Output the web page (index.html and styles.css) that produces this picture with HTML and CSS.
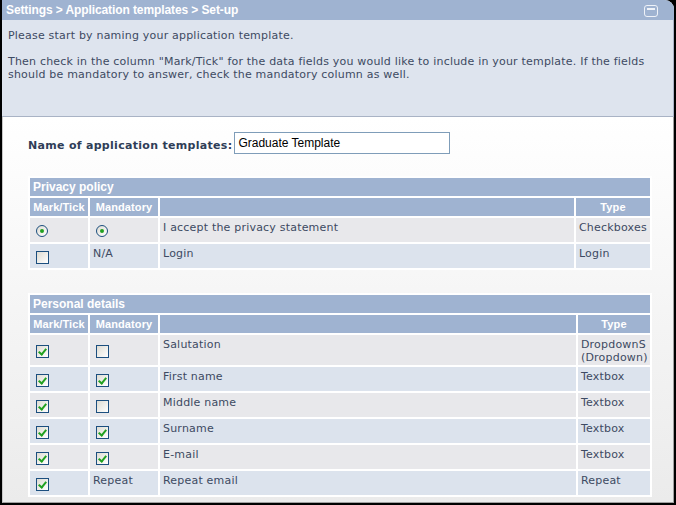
FILE: index.html
```html
<!DOCTYPE html>
<html>
<head>
<meta charset="utf-8">
<link rel="stylesheet" href="styles.css">
</head>
<body>
<div class="window">
  <div class="titlebar">
    <span class="title">Settings &gt; Application templates &gt; Set-up</span>
    <span class="minbtn"></span>
  </div>
  <div class="info">
    <p>Please start by naming your application template.</p>
    <p>Then check in the column "Mark/Tick" for the data fields you would like to include in your template. If the fields should be mandatory to answer, check the mandatory column as well.</p>
  </div>
  <div class="content">
    <div class="namerow">
      <label class="namelabel">Name of application templates:</label>
      <span class="nameinput">Graduate Template</span>
    </div>

    <table class="grid">
      <colgroup><col class="k-mark"><col class="k-mand"><col><col class="k-type1"></colgroup>
      <tr><td class="section" colspan="4">Privacy policy</td></tr>
      <tr class="head"><td>Mark/Tick</td><td>Mandatory</td><td></td><td>Type</td></tr>
      <tr class="odd h24">
        <td class="ctl"><span class="radio"></span></td>
        <td class="ctl"><span class="radio"></span></td>
        <td class="txt">I accept the privacy statement</td>
        <td class="txt">Checkboxes</td>
      </tr>
      <tr class="even h24">
        <td class="ctl"><span class="cb"></span></td>
        <td class="txt">N/A</td>
        <td class="txt">Login</td>
        <td class="txt">Login</td>
      </tr>
    </table>

    <table class="grid second">
      <colgroup><col class="k-mark"><col class="k-mand"><col><col class="k-type2"></colgroup>
      <tr><td class="section" colspan="4">Personal details</td></tr>
      <tr class="head"><td>Mark/Tick</td><td>Mandatory</td><td></td><td>Type</td></tr>
      <tr class="odd tall">
        <td class="ctl mid"><span class="cb on"></span></td>
        <td class="ctl mid"><span class="cb"></span></td>
        <td class="txt">Salutation</td>
        <td class="txt">DropdownS<br>(Dropdown)</td>
      </tr>
      <tr class="even h24">
        <td class="ctl"><span class="cb on"></span></td>
        <td class="ctl"><span class="cb on"></span></td>
        <td class="txt">First name</td>
        <td class="txt">Textbox</td>
      </tr>
      <tr class="odd h24">
        <td class="ctl"><span class="cb on"></span></td>
        <td class="ctl"><span class="cb"></span></td>
        <td class="txt">Middle name</td>
        <td class="txt">Textbox</td>
      </tr>
      <tr class="even h24">
        <td class="ctl"><span class="cb on"></span></td>
        <td class="ctl"><span class="cb on"></span></td>
        <td class="txt">Surname</td>
        <td class="txt">Textbox</td>
      </tr>
      <tr class="odd h24">
        <td class="ctl"><span class="cb on"></span></td>
        <td class="ctl"><span class="cb on"></span></td>
        <td class="txt">E-mail</td>
        <td class="txt">Textbox</td>
      </tr>
      <tr class="even h24">
        <td class="ctl"><span class="cb on"></span></td>
        <td class="txt">Repeat</td>
        <td class="txt">Repeat email</td>
        <td class="txt">Repeat</td>
      </tr>
    </table>
  </div>
</div>
</body>
</html>
```

FILE: styles.css
```css
html, body {
  margin: 0;
  padding: 0;
  background: #000;
}
body {
  width: 676px;
  height: 505px;
  overflow: hidden;
  font-family: "DejaVu Sans", Verdana, sans-serif;
  font-size: 11px;
  letter-spacing: 0.2px;
  color: #3d4a62;
}
.window {
  margin: 0 2px 2px 2px;
  height: 503px;
  background: #f4f4f4;
  border-top-right-radius: 9px;
  overflow: hidden;
  display: flex;
  flex-direction: column;
}
.titlebar {
  height: 20px;
  background: #9fb3d1;
  display: flex;
  align-items: center;
  justify-content: space-between;
  padding: 0 16px 0 4px;
  flex: none;
}
.title {
  font-family: "Liberation Sans", Arial, sans-serif;
  font-weight: bold;
  font-size: 12px;
  color: #fff;
  letter-spacing: -0.1px;
}
.minbtn {
  width: 12px;
  height: 10px;
  border: 1px solid #eef2f8;
  border-radius: 3px;
  position: relative;
  margin-top: 2px;
}
.minbtn::before {
  content: "";
  position: absolute;
  left: 2px;
  right: 2px;
  top: 2px;
  height: 2px;
  background: #eef2f8;
}
.info {
  flex: none;
  background: #dee4ee;
  border-bottom: 1px solid #a9b3c5;
  border-right: 1px solid #a9b3c5;
  padding: 9px 0 0 6px;
  box-sizing: border-box;
  height: 97px;
}
.info p {
  margin: 0 0 13px 0;
  line-height: 13px;
  width: 655px;
}
.content {
  flex: 1;
  background: linear-gradient(#ffffff, #ebebeb);
  border-right: 1px solid #a0a0a0;
  border-bottom: 1px solid #a0a0a0;
  border-left: 1px solid #c8c8c8;
  padding: 15px 0 0 25px;
}
.namerow {
  display: flex;
  align-items: center;
  gap: 2px;
}
.namelabel {
  font-weight: bold;
  color: #2f3d57;
  padding-top: 4px;
  letter-spacing: 0.3px;
}
.nameinput {
  width: 211px;
  height: 20px;
  border: 1px solid #7f9db9;
  background: #fff;
  font-family: "Liberation Sans", Arial, sans-serif;
  font-size: 12px;
  letter-spacing: 0;
  color: #000;
  line-height: 20px;
  padding-left: 3px;
}
.grid {
  border-collapse: separate;
  border-spacing: 2px;
  background: #fff;
  width: 624px;
  margin-top: 22px;
  table-layout: fixed;
}
.grid.second {
  margin-top: 23px;
}
.k-mark { width: 58px; }
.k-mand { width: 68px; }
.k-type1 { width: 74px; }
.k-type2 { width: 72px; }
.grid td {
  padding: 0 3px;
}
.section {
  background: #9fb3d1;
  color: #fff;
  font-family: "Liberation Sans", Arial, sans-serif;
  font-weight: bold;
  font-size: 12px;
  letter-spacing: 0;
  height: 18px;
  padding: 0 3px;
}
.head td {
  background: #9fb3d1;
  color: #fff;
  font-family: "Liberation Sans", Arial, sans-serif;
  font-weight: bold;
  font-size: 11px;
  letter-spacing: 0.1px;
  height: 18px;
  text-align: center;
  padding: 0;
  white-space: nowrap;
}
.odd td { background: #e8e8eb; }
.even td { background: #dce3ed; }
.h24 td { height: 24px; box-sizing: border-box; }
.tall td { height: 30px; box-sizing: border-box; }
.txt {
  vertical-align: top;
  padding-top: 3px !important;
  line-height: 13px;
  box-sizing: border-box;
  white-space: nowrap;
}
.ctl {
  vertical-align: top;
  padding: 7px 0 0 6px !important;
}
.ctl.mid {
  vertical-align: middle;
  padding-top: 2px !important;
}
.cb {
  display: block;
  width: 11px;
  height: 11px;
  border: 1px solid #1c4f7f;
  background: linear-gradient(135deg, #dedcd3, #ffffff);
  position: relative;
}
.cb.on::after {
  content: "";
  position: absolute;
  left: 3px;
  top: 1px;
  width: 3px;
  height: 6px;
  border: solid #21a121;
  border-width: 0 2px 2px 0;
  transform: rotate(40deg);
}
.radio {
  display: block;
  width: 10px;
  height: 10px;
  border: 1px solid #1c4f7f;
  border-radius: 50%;
  background: linear-gradient(135deg, #dedcd3, #ffffff);
  position: relative;
}
.radio::after {
  content: "";
  position: absolute;
  left: 3px;
  top: 3px;
  width: 4px;
  height: 4px;
  border-radius: 50%;
  background: #21a121;
}
```
